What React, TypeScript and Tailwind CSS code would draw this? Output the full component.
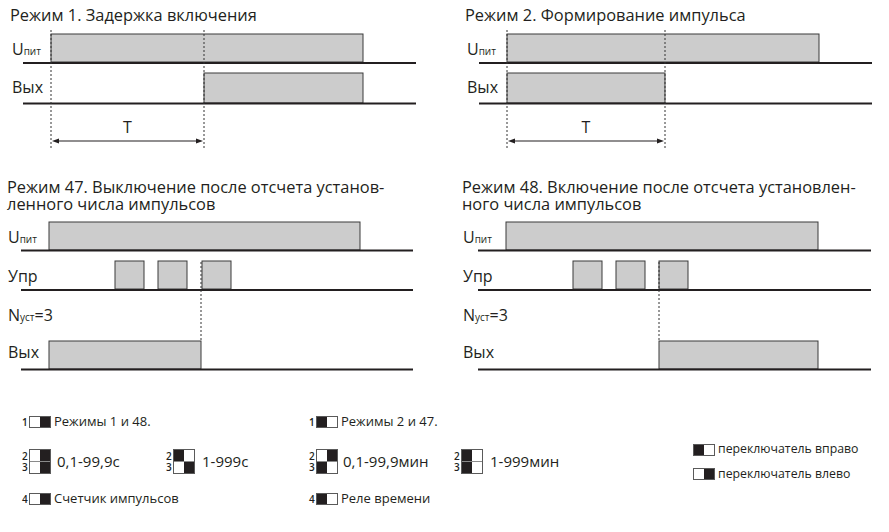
import * as React from "react";

const ink = "#231f20";
const font = "'Open Sans', 'Liberation Sans', sans-serif";

function Pulse({ x1, x2, y1, y2 }: { x1: number; x2: number; y1: number; y2: number }) {
  return <rect x={x1} y={y1} width={x2 - x1} height={y2 - y1} fill="#cccccc" stroke="#3a3a3a" strokeWidth={1} />;
}

function Base({ x1, x2, y }: { x1: number; x2: number; y: number }) {
  return <line x1={x1} x2={x2} y1={y} y2={y} stroke={ink} strokeWidth={2} />;
}

function Dash({ x, y1, y2 }: { x: number; y1: number; y2: number }) {
  return <line x1={x} x2={x} y1={y1} y2={y2} stroke="#333" strokeWidth={1} strokeDasharray="2 2" />;
}

function Arrow({ x1, x2, y }: { x1: number; x2: number; y: number }) {
  return (
    <g fill={ink}>
      <line x1={x1 + 4} x2={x2 - 4} y1={y} y2={y} stroke={ink} strokeWidth={1.2} />
      <path d={`M${x1} ${y} L${x1 + 7} ${y - 2.5} L${x1 + 7} ${y + 2.5} Z`} />
      <path d={`M${x2} ${y} L${x2 - 7} ${y - 2.5} L${x2 - 7} ${y + 2.5} Z`} />
    </g>
  );
}

function Lbl({ x, y, main, sub, tail }: { x: number; y: number; main: string; sub?: string; tail?: string }) {
  return (
    <text x={x} y={y} fontSize={16} fill={ink} fontFamily={font}>
      {main}
      {sub && <tspan fontSize={10}>{sub}</tspan>}
      {tail && <tspan fontSize={16}>{tail}</tspan>}
    </text>
  );
}

function Title({ children, top }: { children: React.ReactNode; top?: boolean }) {
  return (
    <div className={top ? "h-[28px] pt-[6px] text-[16.4px] leading-[17px]" : "h-[36px] text-[16.4px] leading-[17px]"} style={{ color: ink }}>
      {children}
    </div>
  );
}

function Switch({ on }: { on: "l" | "r" }) {
  return (
    <div className="flex h-[12px] w-[22px] border border-[#5a5a5a]">
      <div className={on === "l" ? "flex-1 bg-[#231f20]" : "flex-1 bg-white"} />
      <div className={on === "r" ? "flex-1 bg-[#231f20]" : "flex-1 bg-white"} />
    </div>
  );
}

function Quad({ cells }: { cells: [boolean, boolean, boolean, boolean] }) {
  return (
    <div className="grid h-[25px] w-[22px] grid-cols-2 grid-rows-2 gap-y-px border border-[#5a5a5a] bg-[#8a8a8a]">
      {cells.map((c, i) => (
        <div key={i} className={c ? "bg-[#231f20]" : "bg-white"} />
      ))}
    </div>
  );
}

function Num({ n }: { n: string }) {
  return <span className="w-[7px] text-[10px] leading-[11px] font-semibold">{n}</span>;
}

function Nums() {
  return (
    <div className="flex w-[7px] flex-col text-[10px] leading-[11px] font-semibold">
      <span>2</span>
      <span>3</span>
    </div>
  );
}

export default function App() {
  return (
    <div className="h-[532px] w-[889px] overflow-hidden bg-white" style={{ fontFamily: font, color: ink }}>
      <div className="grid grid-cols-[444px_445px]">
        <div>
          <div className="pl-[10px]">
            <Title top>Режим 1. Задержка включения</Title>
          </div>
          <svg width={444} height={150} viewBox="0 28 444 150" className="block">
            <Pulse x1={51} x2={363} y1={34} y2={62} />
            <Pulse x1={204} x2={363} y1={73} y2={103} />
            <Base x1={23} x2={416} y={63} />
            <Base x1={23} x2={416} y={103.5} />
            <Dash x={51} y1={30} y2={150} />
            <Dash x={204} y1={30} y2={150} />
            <Arrow x1={52} x2={203} y={141} />
            <Lbl x={12} y={55} main="U" sub="пит" />
            <Lbl x={12} y={93} main="Вых" />
            <text x={127.5} y={133} fontSize={16} fill={ink} fontFamily={font} textAnchor="middle">T</text>
          </svg>
        </div>
        <div>
          <div className="pl-[21px]">
            <Title top>Режим 2. Формирование импульса</Title>
          </div>
          <svg width={445} height={150} viewBox="444 28 445 150" className="block">
            <Pulse x1={507} x2={819} y1={34} y2={62} />
            <Pulse x1={507} x2={665} y1={73} y2={103} />
            <Base x1={479} x2={872} y={63} />
            <Base x1={479} x2={872} y={103.5} />
            <Dash x={507} y1={30} y2={150} />
            <Dash x={665} y1={30} y2={150} />
            <Arrow x1={508} x2={664} y={141} />
            <Lbl x={467} y={55} main="U" sub="пит" />
            <Lbl x={467} y={93} main="Вых" />
            <text x={586} y={133} fontSize={16} fill={ink} fontFamily={font} textAnchor="middle">T</text>
          </svg>
        </div>
        <div>
          <div className="pl-[7px]">
            <Title>
              Режим 47. Выключение после отсчета установ-
              <br />
              ленного числа импульсов
            </Title>
          </div>
          <svg width={444} height={161} viewBox="0 214 444 161" className="block">
            <Pulse x1={49} x2={360} y1={222} y2={250} />
            <Pulse x1={115} x2={144} y1={261} y2={289} />
            <Pulse x1={158} x2={187} y1={261} y2={289} />
            <Pulse x1={202} x2={231} y1={261} y2={289} />
            <Pulse x1={49} x2={201} y1={341} y2={369} />
            <Base x1={21} x2={413} y={250.5} />
            <Base x1={21} x2={413} y={290} />
            <Base x1={21} x2={413} y={369.5} />
            <Dash x={201} y1={262} y2={341} />
            <Lbl x={8} y={243} main="U" sub="пит" />
            <Lbl x={8} y={282} main="Упр" />
            <Lbl x={8} y={321} main="N" sub="уст" tail="=3" />
            <Lbl x={8} y={358} main="Вых" />
          </svg>
        </div>
        <div>
          <div className="pl-[18px]">
            <Title>
              Режим 48. Включение после отсчета установлен-
              <br />
              ного числа импульсов
            </Title>
          </div>
          <svg width={445} height={161} viewBox="444 214 445 161" className="block">
            <Pulse x1={506} x2={818} y1={222} y2={250} />
            <Pulse x1={573} x2={602} y1={261} y2={289} />
            <Pulse x1={616} x2={645} y1={261} y2={289} />
            <Pulse x1={659} x2={688} y1={261} y2={289} />
            <Pulse x1={659} x2={818} y1={341} y2={369} />
            <Base x1={478} x2={871} y={250.5} />
            <Base x1={478} x2={871} y={290} />
            <Base x1={478} x2={871} y={369.5} />
            <Dash x={659} y1={262} y2={341} />
            <Lbl x={463} y={243} main="U" sub="пит" />
            <Lbl x={463} y={282} main="Упр" />
            <Lbl x={463} y={321} main="N" sub="уст" tail="=3" />
            <Lbl x={463} y={358} main="Вых" />
          </svg>
        </div>
      </div>

      <div className="grid grid-cols-[287px_384px_1fr] pl-[22px] text-[13px]">
        <div className="flex flex-col pt-[41px]">
          <div className="flex h-[12px] items-center">
            <Num n="1" />
            <Switch on="r" />
            <span className="ml-[3px]">Режимы 1 и 48.</span>
          </div>
          <div className="mt-[21px] flex h-[25px]">
            <div className="flex w-[144px] items-center">
              <Nums />
              <Quad cells={[false, true, false, true]} />
              <span className="ml-[6px] text-[15px]">0,1-99,9с</span>
            </div>
            <div className="flex items-center">
              <Nums />
              <Quad cells={[true, false, false, true]} />
              <span className="ml-[7px] text-[15px]">1-999с</span>
            </div>
          </div>
          <div className="mt-[19px] flex h-[12px] items-center">
            <Num n="4" />
            <Switch on="r" />
            <span className="ml-[3px]">Счетчик импульсов</span>
          </div>
        </div>
        <div className="flex flex-col pt-[41px]">
          <div className="flex h-[12px] items-center">
            <Num n="1" />
            <Switch on="l" />
            <span className="ml-[3px]">Режимы 2 и 47.</span>
          </div>
          <div className="mt-[21px] flex h-[25px]">
            <div className="flex w-[145px] items-center">
              <Nums />
              <Quad cells={[false, true, true, false]} />
              <span className="ml-[5px] text-[15px]">0,1-99,9мин</span>
            </div>
            <div className="flex items-center">
              <Nums />
              <Quad cells={[true, false, true, false]} />
              <span className="ml-[7px] text-[15px]">1-999мин</span>
            </div>
          </div>
          <div className="mt-[19px] flex h-[12px] items-center">
            <Num n="4" />
            <Switch on="l" />
            <span className="ml-[3px]">Реле времени</span>
          </div>
        </div>
        <div className="flex flex-col pt-[68px] text-[12.3px]">
          <div className="flex h-[13px] items-center">
            <Switch on="l" />
            <span className="ml-[3px]">переключатель вправо</span>
          </div>
          <div className="mt-[12px] flex h-[12px] items-center">
            <Switch on="r" />
            <span className="ml-[3px]">переключатель влево</span>
          </div>
        </div>
      </div>
    </div>
  );
}
